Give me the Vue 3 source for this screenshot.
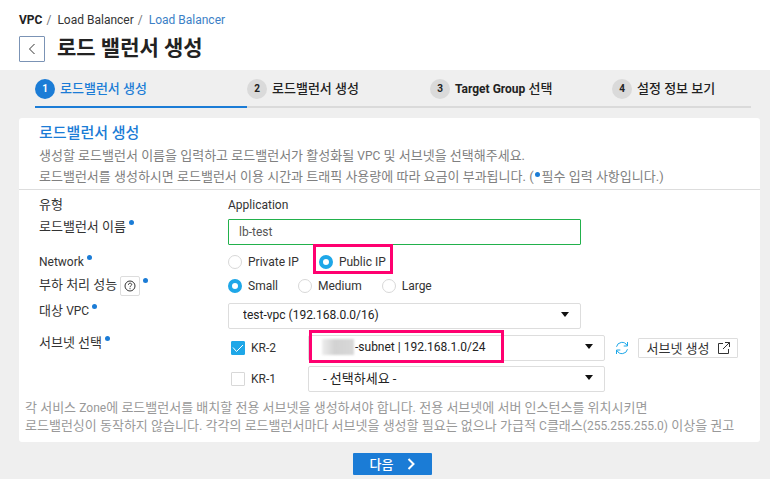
<script setup>
import { ref } from 'vue'

const steps = [
  { text: '로드밸런서 생성' },
  { text: '로드밸런서 생성' },
  { latin: 'Target Group', text: ' 선택' },
  { text: '설정 정보 보기' },
]
const current = 0

const name = ref('lb-test')
const network = ref('public')
const size = ref('small')
const kr2 = ref(true)
const kr1 = ref(false)

const networks = [
  { value: 'private', label: 'Private IP' },
  { value: 'public', label: 'Public IP' },
]
const sizes = [
  { value: 'small', label: 'Small' },
  { value: 'medium', label: 'Medium' },
  { value: 'large', label: 'Large' },
]
</script>

<template>
  <div class="page">
    <header class="header">
      <nav class="crumbs">
        <a href="#" class="root">VPC</a><span class="sep">/</span>
        <a href="#">Load Balancer</a><span class="sep">/</span>
        <a href="#" class="here">Load Balancer</a>
      </nav>
      <div class="heading">
        <button class="back" type="button" aria-label="Back">
          <svg width="8" height="12" viewBox="0 0 8 12"><path d="M6.5 1 1.5 6l5 5" /></svg>
        </button>
        <h1>로드 밸런서 생성</h1>
      </div>
    </header>

    <ol class="steps">
      <li v-for="(step, i) in steps" :key="i" :class="{ active: i === current }">
        <span class="num">{{ i + 1 }}</span>
        <span><span v-if="step.latin" class="latin">{{ step.latin }}</span>{{ step.text }}</span>
      </li>
    </ol>

    <main class="card">
      <section class="intro">
        <h2>로드밸런서 생성</h2>
        <p>생성할 로드밸런서 이름을 입력하고 로드밸런서가 활성화될 <span class="latin">VPC</span> 및 서브넷을 선택해주세요.</p>
        <p>로드밸런서를 생성하시면 로드밸런서 이용 시간과 트래픽 사용량에 따라 요금이 부과됩니다. (<i class="dot"></i>필수 입력 사항입니다.)</p>
      </section>

      <form class="form" @submit.prevent>
        <div class="row type">
          <span class="label">유형</span>
          <span class="latin">Application</span>
        </div>

        <div class="row field">
          <label class="label" for="lb-name">로드밸런서 이름<i class="dot"></i></label>
          <input id="lb-name" v-model="name" class="text wide" type="text" />
        </div>

        <div class="row radios first" role="radiogroup" aria-labelledby="network-label">
          <span id="network-label" class="label"><span class="latin">Network</span><i class="dot"></i></span>
          <label v-for="n in networks" :key="n.value" class="radio" :class="{ marked: n.value === 'public' }">
            <input v-model="network" type="radio" name="network" :value="n.value" />{{ n.label }}
          </label>
        </div>

        <div class="row radios" role="radiogroup" aria-labelledby="size-label">
          <span id="size-label" class="label">부하 처리 성능<button class="help" type="button" aria-label="Help">
            <svg width="12" height="12" viewBox="0 0 12 12">
              <circle cx="6" cy="6" r="5" />
              <path d="M4.4 4.8c0-2.2 3.3-2.1 3.3-.2C7.700 5.700 6 5.800 6 7.200M6 8.200v1" />
            </svg>
          </button><i class="dot"></i></span>
          <label v-for="s in sizes" :key="s.value" class="radio">
            <input v-model="size" type="radio" name="size" :value="s.value" />{{ s.label }}
          </label>
        </div>

        <div class="row field">
          <label class="label" for="vpc">대상 <span class="latin">VPC</span><i class="dot"></i></label>
          <div class="select wide">
            <select id="vpc" class="latin"><option>test-vpc (192.168.0.0/16)</option></select>
            <svg width="8" height="5" viewBox="0 0 8 5"><path d="M0 0h8L4 5z" /></svg>
          </div>
        </div>

        <div class="row field subnet">
          <span class="label">서브넷 선택<i class="dot"></i></span>
          <label class="zone">
            <span class="box">
              <input v-model="kr2" type="checkbox" />
              <svg v-if="kr2" width="14" height="14" viewBox="0 0 14 14"><path d="m2 6.500 3.500 4L12 4" /></svg>
            </span>KR-2
          </label>
          <div class="select zoned marked">
            <select class="latin masked" aria-label="KR-2"><option>-subnet | 192.168.1.0/24</option></select>
            <span class="mask"></span>
            <svg width="8" height="5" viewBox="0 0 8 5"><path d="M0 0h8L4 5z" /></svg>
          </div>
          <button class="refresh" type="button" aria-label="Refresh">
            <svg width="14" height="14" viewBox="0 0 14 14">
              <path d="M1.500 5.800A5.600 5.600 0 0 1 12 4.500M12.500 8.200A5.600 5.600 0 0 1 2 9.500" />
              <path d="M12.500 1v4H8.700M1.500 13V9h3.800" />
            </svg>
          </button>
          <button class="create" type="button">서브넷 생성
            <svg width="12" height="12" viewBox="0 0 12 12"><path d="M5 1.500H.5v10h10V7M7 .5h4.500V5M11.500.5 5 7" /></svg>
          </button>
        </div>

        <div class="row field">
          <span class="label"></span>
          <label class="zone">
            <span class="box">
              <input v-model="kr1" type="checkbox" />
              <svg v-if="kr1" width="14" height="14" viewBox="0 0 14 14"><path d="m2 6.500 3.500 4L12 4" /></svg>
            </span>KR-1
          </label>
          <div class="select zoned">
            <select aria-label="KR-1"><option>- 선택하세요 -</option></select>
            <svg width="8" height="5" viewBox="0 0 8 5"><path d="M0 0h8L4 5z" /></svg>
          </div>
        </div>
      </form>

      <p class="note">
        각 서비스 <span class="latin">Zone</span>에 로드밸런서를 배치할 전용 서브넷을 생성하셔야 합니다. 전용 서브넷에 서버 인스턴스를 위치시키면<br />
        로드밸런싱이 동작하지 않습니다. 각각의 로드밸런서마다 서브넷을 생성할 필요는 없으나 가급적 <span class="latin">C</span>클래스<span class="latin">(255.255.255.0)</span> 이상을 권고
      </p>
    </main>

    <footer class="footer">
      <button class="next" type="button">다음
        <svg width="8" height="12" viewBox="0 0 8 12"><path d="m1.500 1 5 5-5 5" /></svg>
      </button>
    </footer>
  </div>
</template>

<style>
body {
  margin: 0;
  background: #efefef;
}
</style>

<style scoped>
.page,
button,
input,
select {
  font-family: Roboto, "Noto Sans CJK KR", sans-serif;
  font-size: 13px;
  color: #333;
}
.page {
  min-height: 100vh;
  background: #efefef;
}
* {
  box-sizing: border-box;
}
.latin,
.radio,
.zone,
.text {
  font-size: 12px;
}
span.latin {
  line-height: 1;
}
h1,
h2,
p,
ol {
  margin: 0;
  padding: 0;
}
button {
  padding: 0;
  cursor: pointer;
}
svg {
  fill: none;
  stroke: #333;
  flex: none;
}

.header {
  background: #fff;
  padding: 10px 19px 8px;
}
.crumbs {
  display: flex;
  font-size: 12px;
  line-height: 20px;
}
.crumbs a {
  color: #333;
  text-decoration: none;
}
.crumbs .root {
  font-weight: 700;
  color: #222;
}
.crumbs .here {
  color: #3c7fc6;
}
.sep {
  margin: 0 6px 0 4px;
  color: #777;
}
.heading {
  display: flex;
  align-items: center;
  gap: 12px;
  margin-top: 6px;
  height: 26px;
}
.back {
  display: flex;
  align-items: center;
  justify-content: center;
  width: 26px;
  height: 26px;
  background: #fff;
  border: 1px solid #7b93b5;
  border-radius: 1px;
}
h1 {
  font-size: 21px;
  font-weight: 700;
  line-height: 24px;
  padding-bottom: 2px;
  color: #222;
}

.steps {
  display: grid;
  grid-template-columns: 212fr 183fr 182fr 139fr;
  margin: 0 19px 10px 35px;
  list-style: none;
}
.steps li {
  display: flex;
  align-items: center;
  gap: 5px;
  padding: 9px 0 7px;
  line-height: 20px;
  font-weight: 500;
  font-size: 13px;
  color: #222;
  border-bottom: 2px solid #dadada;
}
.steps .num {
  width: 20px;
  height: 20px;
  border-radius: 50%;
  background: #dadada;
  text-align: center;
  font-size: 10px;
  font-weight: 700;
}
.steps .active {
  color: #1b7cd6;
  border-color: #1b7cd6;
}
.steps .active .num {
  background: #1b7cd6;
  color: #fff;
}
.steps .latin {
  font-weight: 700;
}

.card {
  margin: 0 10px 0 19px;
  background: #fff;
  border-radius: 3px;
}
.intro {
  padding: 3px 20px 2px;
  border-bottom: 1px solid #ddd;
}
h2 {
  font-size: 15px;
  font-weight: 500;
  line-height: 24px;
  color: #1b7cd6;
}
.intro p {
  line-height: 21px;
  color: #808080;
}
.dot {
  display: inline-block;
  width: 5px;
  height: 5px;
  margin: 0 2px 0 1px;
  border-radius: 50%;
  background: #1b7cd6;
  vertical-align: 4px;
}
.label .dot {
  margin-left: 3px;
  vertical-align: 6px;
}

.form {
  padding: 5px 20px 0;
}
.row {
  display: flex;
  align-items: center;
  line-height: 18px;
}
.label {
  width: 189px;
  flex: none;
}
.field {
  margin-top: 5px;
}
.field.subnet {
  margin-top: 6px;
}
.field .label {
  align-self: flex-start;
  margin-top: -1px;
}
.type {
  height: 19px;
}
.wide {
  flex: 0 1 353px;
}
.text {
  height: 26px;
  min-width: 0;
  padding: 0 10px;
  border: 1px solid #22b14c;
  border-radius: 1px;
  background: #fff;
  outline: none;
  color: #555;
}
.radios {
  height: 24px;
}
.radios.first {
  margin-top: 5px;
}
.radio {
  position: relative;
  display: flex;
  align-items: center;
  gap: 6px;
  margin-right: 20px;
}
.radio input {
  appearance: none;
  width: 14px;
  height: 14px;
  margin: 0;
  border: 1px solid #d8d8d8;
  border-radius: 50%;
  background: #fff;
}
.radio input:checked {
  border: 4px solid #1ea7e8;
}
.marked::after {
  content: "";
  position: absolute;
  border: 3px solid #ff0070;
  pointer-events: none;
}
.radio.marked::after {
  inset: -9px -7px -3px -6px;
}
.select.marked::after {
  inset: -5px 101px -2px 1px;
}
.help {
  display: inline-flex;
  align-items: center;
  justify-content: center;
  width: 20px;
  height: 20px;
  margin: 0 0 0 3px;
  vertical-align: middle;
  border: 1px solid #ddd;
  border-radius: 2px;
  background: #fff;
}
.select {
  position: relative;
  height: 26px;
}
.select select {
  appearance: none;
  display: block;
  width: 100%;
  height: 26px;
  padding: 0 30px 2px 14px;
  border: 1px solid #ddd;
  border-radius: 2px;
  background: #fff;
  color: #222;
}
.select .masked {
  padding-left: 46px;
}
.select svg {
  position: absolute;
  right: 12px;
  top: 9px;
  fill: #111;
  stroke: none;
  pointer-events: none;
}
.mask {
  position: absolute;
  left: 14px;
  top: 4px;
  width: 32px;
  height: 16px;
  background: linear-gradient(90deg, #eee, #d2d2d2 40%, #d8d8d8);
  filter: blur(1px);
  pointer-events: none;
}
.zoned {
  flex: 0 1 297px;
}
.zone {
  display: flex;
  align-items: center;
  gap: 6px;
  flex: none;
  width: 80px;
  padding-left: 3px;
}
.box {
  position: relative;
  display: flex;
}
.box input {
  appearance: none;
  width: 14px;
  height: 14px;
  margin: 0;
  border: 1px solid #d8d8d8;
  border-radius: 1px;
}
.box input:checked {
  background: #1ea7e8;
  border-color: #1ea7e8;
}
.box svg {
  position: absolute;
  inset: 0;
  stroke: #fff;
  pointer-events: none;
}
.refresh {
  display: flex;
  margin: 0 9px 0 10px;
  border: 0;
  background: none;
}
.refresh svg {
  stroke: #1ea7e8;
}
.create {
  display: flex;
  align-items: center;
  justify-content: center;
  gap: 8px;
  flex: none;
  width: 100px;
  height: 20px;
  padding-bottom: 1px;
  border: 1px solid #ddd;
  border-radius: 1px;
  background: #fff;
}

.note {
  padding: 7px 6px;
  line-height: 18px;
  color: #999;
}
.footer {
  display: flex;
  justify-content: center;
  padding: 11px 4px 4px 19px;
}
.next {
  display: flex;
  align-items: center;
  justify-content: center;
  gap: 14px;
  width: 79px;
  height: 22px;
  padding-bottom: 1px;
  border: 0;
  border-radius: 1px;
  background: #1b7cd6;
  color: #fff;
  font-weight: 500;
}
.next svg {
  stroke: #fff;
  stroke-width: 2;
}
</style>
